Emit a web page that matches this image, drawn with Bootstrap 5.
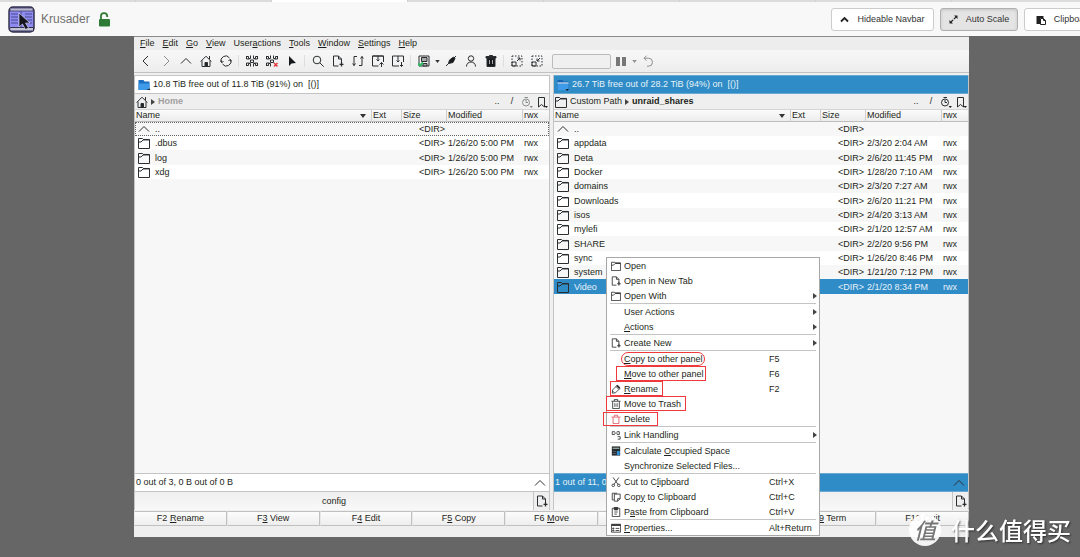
<!DOCTYPE html>
<html lang="en">
<head>
<meta charset="utf-8">
<meta name="viewport" content="width=device-width, initial-scale=1">
<title>Krusader</title>
<link href="https://cdn.jsdelivr.net/npm/bootstrap@5.3.0/dist/css/bootstrap.min.css" rel="stylesheet">
<style>
  body { background:#666; font-family:"Liberation Sans",Arial,sans-serif; font-size:9px; line-height:13px; color:#1d1f20; }
  svg { fill:none; stroke:#2b2e30; stroke-width:1; flex:none; display:block; }
  button, input { font:inherit; color:inherit; }
  u { text-underline-offset:1px; }
  svg.glyph { width:12px; height:12px; }

  .tab-strip { height:2px; background:#dcdcdc; }
  .tab-strip i { width:136px; border-right:1px solid #cfcfcf; }
  .tab-strip i.current { background:#fff; }
  .top-nav { height:34px; background:#f8f8f8; padding-left:8px; }
  .top-nav .app-logo { width:27px; height:27px; }
  .top-nav .title { font-size:12px; color:#707070; margin-left:6px; text-decoration:none; }
  .top-nav .btn { height:23px; padding:1px 0 0; font-size:9px; color:#333; background:#fff; border:1px solid #ccc; border-radius:3px; gap:8px; }
  .top-nav .btn.active { background:#e4e4e4; border-color:#b0b0b0; box-shadow:inset 0 1px 3px rgba(0,0,0,.14); }
  .top-nav .tools { gap:6px; margin-right:-24px; }
  .w-hide { width:103px; } .w-scale { width:78px; } .w-clip { width:80px; }

  .krusader { margin:0 111px 20px 134px; background:#efefef; border-top:1px solid #8b8b8b; }
  .menu-bar { height:13px; gap:8px; padding-left:6px; background:#ededed; }
  .menu-bar a { color:inherit; text-decoration:none; }
  .tool-bar { height:23px; padding-left:2px; border-bottom:1px solid #c2c2c2; background:linear-gradient(#f8f8f8,#ededed); }
  .flat { border:0; background:none; padding:0; display:flex; align-items:center; justify-content:center; }
  .tool-bar .flat { width:20px; height:20px; }
  .tool-bar .flat.arrow { width:7px; }
  .tool-bar .vr-line { width:1px; height:12px; background:#dedede; margin:0 3px 0 2px; }
  .tool-bar input { width:59px; height:15px; margin-left:5px; border:1px solid #bcbcbc; border-radius:2px; background:#f0f0f0; }
  .muted-icon { opacity:.5; }

  .panels { gap:3px; padding-top:2px; padding-bottom:1px; }
  .pane { min-width:0; border:solid #c4c4c4; border-width:0 1px; }
  .disk { height:19px; border:solid #c4c4c4; border-width:1px 0; background:#fff; padding-left:3px; gap:3px; }
  .focused .disk, .focused .stat { background:#308cc6; color:#e6f2fa; border-color:#6aa9d2; }
  .crumbs { height:15px; padding:0 1px; gap:3px; }
  .crumbs a { color:inherit; text-decoration:none; }
  .crumbs .here-muted { color:#a0a0a0; }
  .crumbs .flat { width:12px; }
  .list-area { background:#f7f7f7; }
  .files { width:100%; table-layout:fixed; border-collapse:separate; border-spacing:0; }
  .files th { height:13px; line-height:11px; font-weight:400; padding:0 1px; border-bottom:1px solid #bdbdbd; border-top:1px solid #d4d4d4; border-left:1px solid #cfcfcf; background:linear-gradient(#fbfbfb,#ededed); }
  .files th:first-child { border-left:0; }
  .files td { height:14px; line-height:14px; padding:0 1px; white-space:nowrap; }
  .files tbody tr:nth-child(3n) td { height:15px; }
  .files tbody tr:nth-child(even) td { background:#fff; }
  .files tbody tr.picked td { background:#308cc6; color:#e6f2fa; }
  .files tbody tr.cursor { outline:1px dotted #666; outline-offset:-1px; }
  .files .size { text-align:right; }
  .files td.date, .files td.perm { padding-left:2px; }
  .c-ext { width:30px; } .c-size { width:45px; } .c-date { width:76px; } .c-perm { width:27px; }
  .fname { gap:5px; padding-left:2px; }
  .stat { height:19px; background:#fff; border:solid #c4c4c4; border-width:1px 0; padding:0 3px 0 1px; }
  .tab-row { height:18px; }
  .tab-row .tab-btn { background:linear-gradient(#efefef,#f8f8f8); border:0; border-right:1px solid #c4c4c4; padding:0; }
  .tab-row .flat { width:15px; }
  .fkeys button { height:15px; line-height:13px; padding:0; border:1px solid #c0c0c0; border-left-color:#e8e8e8; border-radius:1px; background:linear-gradient(#fcfcfc,#eee); flex:1 1 0; }
  .foot { height:11px; }

  .context { top:182px; left:52px; width:214px; z-index:5; background:#fff; border:1px solid #a8a8a8; }
  .context button { width:100%; height:15px; line-height:15px; border:0; background:none; padding:1px 2px 0 4px; display:flex; align-items:center; text-align:left; position:relative; white-space:nowrap; }
  .context hr { height:1px; margin:0 3px; border:0; background:#c4c4c4; opacity:1; }
  .context .pic { width:13px; flex:none; }
  .context .pic svg { width:10px; height:10px; }
  .context .label-text { flex:1; }
  .context kbd { width:48px; padding:0; background:none; color:inherit; font:inherit; }
  .context .sub { width:4px; height:6px; }
  .mark-box { position:absolute; height:15px; top:0; z-index:1; border:1px solid #f0393c; pointer-events:none; }
  .m-copy { left:14px; width:84px; height:14px; border-radius:7px; top:1px; }
  .m-move { left:9px; width:90px; }
  .m-rename { left:3px; width:53px; }
  .m-trash { left:-1px; width:80px; }
  .m-delete { left:-4px; width:55px; height:14px; top:1px; }

  .stamp { right:9px; bottom:11px; z-index:10; gap:10px; color:#fff; font-family:"Noto Sans CJK SC",sans-serif; font-size:24px; font-weight:500; line-height:32px; text-shadow:1px 1px 2px rgba(0,0,0,.55); pointer-events:none; }
  .stamp .seal { width:32px; height:32px; border-radius:50%; background:rgba(255,255,255,.93); color:#777; font-size:22px; line-height:30px; text-align:center; font-style:italic; text-shadow:none; }
</style>
</head>
<body class="vh-100 d-flex flex-column overflow-hidden">

<svg class="d-none" aria-hidden="true">
  <symbol id="left" viewBox="0 0 12 12"><path d="M8 1 3 6l5 5"/></symbol>
  <symbol id="right" viewBox="0 0 12 12"><path d="m4 1 5 5-5 5"/></symbol>
  <symbol id="up" viewBox="0 0 12 12"><path d="m1 8.500 5-5 5 5"/></symbol>
  <symbol id="home" viewBox="0 0 12 12"><path d="M.7 6.500 6 1.200l5.300 5.300M2 5.500v6h8v-6M9.500 1v3"/><path d="M5 11V7.500h2.500V11z" fill="#222"/></symbol>
  <symbol id="reload" viewBox="0 0 12 12"><path d="M1.500 7.500a4.600 4.600 0 0 1 8-4.500M10.500 4.500a4.600 4.600 0 0 1-8 4.500M.3 5.500l1.200 2 2-1M11.700 6.500l-1.200-2-2 1"/></symbol>
  <symbol id="sel" viewBox="0 0 12 12"><path d="M.5 1.500h2v2h2v-3M11.500 1.500h-2v2h-2v-3M.5 10.500h2v-2h2v3M11.500 10.500h-2v-2h-2v3M4.500 5h3v2.500h-3zM.5 1v3h3M11.500 1v3h-3M.5 11V8h3M11.500 11V8h-3"/></symbol>
  <symbol id="unsel" viewBox="0 0 12 12"><path d="M.5 1.500h2v2h2v-3M11.500 1.500h-2v2h-2v-3M.5 10.500h2v-2h2v3M4.500 5h3v2.500h-3zM.5 1v3h3M11.500 1v3h-3M.5 11V8h3"/><path d="m8 8 3.500 3.500M11.500 8 8 11.500" stroke="#e0353a" stroke-width="1.400"/></symbol>
  <symbol id="pointer" viewBox="0 0 12 12"><path d="M3 1v10l2.500-2.500L10 8z" fill="#16191b" stroke="none"/></symbol>
  <symbol id="search" viewBox="0 0 12 12"><circle cx="5" cy="5" r="3.800"/><path d="m7.700 7.700 4 4"/></symbol>
  <symbol id="newtab" viewBox="0 0 12 12"><path d="M6.500 11h-5V1h5l3 3v4M6.500 1v3h3"/><path d="M9.500 7v4.500M7.500 9.300h4" stroke-width="1.300"/></symbol>
  <symbol id="sync" viewBox="0 0 12 12"><path d="M5 1.500H2v9M.7 8.500 2 10.500l1.500-2M7 10.500h3v-9M8.500 3.500 10 1.500l1.300 2"/></symbol>
  <symbol id="pack" viewBox="0 0 12 12"><path d="M6.500 11h-6V1h11v6M.5 1h11M6 1v5M4.500 4.500 6 6l1.500-1.500M9.500 12V7.500M7.500 9.500l2-2 2 2"/></symbol>
  <symbol id="unpack" viewBox="0 0 12 12"><path d="M7 11H.5V1h11v6M6 1v6M4.500 5.500 6 7l1.500-1.500M9.500 7v4.500M8 10l1.500 1.500L11 10"/></symbol>
  <symbol id="device" viewBox="0 0 12 12"><path d="M1 1h10v10H1z"/><path d="M3.500 2.500h5.500v4H3.500zM5 8.500h4V11H5z" fill="#aaa"/><path d="m.5 8.500 1.500 2 3-3" stroke="#2bbd62" stroke-width="2"/></symbol>
  <symbol id="plug" viewBox="0 0 12 12"><path d="m1 11 3-3M8.500 3.500 11 1"/><path d="m3.500 8.500 1-3.500 4-3 1.500 1.500-2 4z" fill="#16191b"/></symbol>
  <symbol id="person" viewBox="0 0 12 12"><circle cx="6" cy="3.500" r="2.700"/><path d="M1.500 11.500c0-6 9-6 9 0"/></symbol>
  <symbol id="bin" viewBox="0 0 12 12"><path d="M2 3h8v8.500H2zM1 1.500h10V3H1zM4.500.5h3v1h-3z" fill="#16191b"/><path d="M4.500 5v4M7.500 5v4" stroke="#aaa"/></symbol>
  <symbol id="grow" viewBox="0 0 12 12"><path d="M1 1h10v10H1z" stroke-dasharray="1.500 1.500"/><path d="M1 7h4v4H1zM6 6l3-3M6.500 3H9v2.500"/></symbol>
  <symbol id="shrink" viewBox="0 0 12 12"><path d="M1 1h10v10H1z" stroke-dasharray="1.500 1.500"/><path d="M1 7h4v4H1zM9 3 6 6M6 3.500V6h2.500"/></symbol>
  <symbol id="undo" viewBox="0 0 12 12"><path d="M4.500.7 2 3.200l2.500 2.500M2 3.200h4.500a4 4 0 0 1 0 8H5"/></symbol>
  <symbol id="dir" viewBox="0 0 12 12"><path d="M.5 1.500h4l1 1h6v9H.5zM.5 5h2.500l2-2"/><path d="M5 2.700h6.500" stroke-width="1.500"/></symbol>
  <symbol id="clock" viewBox="0 0 12 12"><circle cx="5" cy="6.500" r="3.500"/><path d="M5 4v2.500h2M3.500 1.500h3.500"/><path d="M8.500 10h3.500l-1.700 2z" fill="#222" stroke="none"/></symbol>
  <symbol id="mark" viewBox="0 0 12 12"><path d="M2.500 1.500h6V11l-3-2.500-3 2.500z"/><path d="M8.500 10h3.500l-1.700 2z" fill="#222" stroke="none"/></symbol>
  <symbol id="tri-r" viewBox="0 0 4 6"><path d="m0 0 4 3-4 3z" fill="#444" stroke="none"/></symbol>
  <symbol id="tri-d" viewBox="0 0 6 4"><path d="M0 0h6L3 4z" fill="#333" stroke="none"/></symbol>
  <symbol id="disk" viewBox="0 0 12 12"><path d="M.5 1h5l1 1.500h5V11H.5z" fill="#1b6ec2" stroke="none"/><path d="M.5 4.500h11V11H.5z" fill="#3f9be8" stroke="none"/><path d="M8 11h4v-1.500z" fill="#123" stroke="none"/></symbol>
  <symbol id="disk-lit" viewBox="0 0 12 12"><path d="M.5 1h5l1 1.500h5V11H.5z" fill="#1763b4" stroke="none"/><path d="M.5 4.500h11V11H.5z" fill="#3f9be8" stroke="none"/><path d="M.5 4h11" stroke="#f4faff"/><path d="M8.500 10h3.500l-1.700 2z" fill="#123" stroke="none"/></symbol>
  <symbol id="pen" viewBox="0 0 12 12"><path d="m1.500 11 .5-4 5-5 3.500 3.500-5 5zM6 3l3.500 3.500M2 8.500 3.500 10"/><path d="M7 1.500 10.500 5" stroke-width="2"/></symbol>
  <symbol id="can" viewBox="0 0 12 12"><path d="M2 3v8.500h8V3M.5 2.700h11M4 2.500v-2h4v2M4.700 5v4.500M7.300 5v4.500"/></symbol>
  <symbol id="can-red" viewBox="0 0 12 12"><path stroke="#dd5360" d="M2.500 4v7.500h7V4M.5 3.700h11M4 3.500v-2h4v2"/></symbol>
  <symbol id="chain" viewBox="0 0 12 12"><path d="M4.500 2H1.500v3.500h3M7 2h3v3.500H7M8 8h3v3H8M3.500 3.700h4.500"/></symbol>
  <symbol id="calc" viewBox="0 0 12 12"><path d="M1 .5h10v11H1z" fill="#25292c" stroke="none"/><path d="M2 2h8v1.500H2z" fill="#9aa" stroke="none"/><path d="M7 6h3.500v5H7z" fill="#2f8fd8" stroke="none"/><path d="M2 6.500h4M2 9h4" stroke="#667"/></symbol>
  <symbol id="cut" viewBox="0 0 12 12"><path d="m2.500.5 6 8.500M9.500.5 3.500 9"/><circle cx="2.700" cy="10" r="1.500"/><circle cx="9.300" cy="10" r="1.500"/></symbol>
  <symbol id="copy" viewBox="0 0 12 12"><path d="M3.500 9.500h-2v-8h6M4 2.500h7V8l-3 3H4zM8 11V8h3"/></symbol>
  <symbol id="paste" viewBox="0 0 12 12"><path d="M1.500 1.500h9v10h-9zM4 6h4M4 8.500h3"/><path d="M4 .5h4v3H4z" fill="#333"/></symbol>
  <symbol id="props" viewBox="0 0 12 12"><path d="M.5 1.500h11v9.500H.5zM5.500 6.500h4.500M5.500 9h4.500"/><path d="M.5 2.500h11" stroke-width="2"/><path d="M2 6h1.500v1H2zM2 8.500h1.500v1H2z"/></symbol>
</svg>

<div class="tab-strip d-flex flex-shrink-0"><i></i><i></i><i class="current"></i><i></i><i></i><i></i><i></i></div>

<nav class="top-nav d-flex align-items-center flex-shrink-0 overflow-hidden">
  <svg class="app-logo" viewBox="0 0 27 27"><rect x="1" y="1" width="25" height="25" rx="4" fill="#8d8bef" stroke="#33324e" stroke-width="1.500"/><path d="M2 2h23v3H2z" fill="#b9b8d8" stroke="#33324e" stroke-width=".7"/><path d="M3 8h7M3 11h7M3 14h7M3 17h7M17 8h7M17 11h7M17 14h7M17 17h7M13 5v16" stroke="#4a4990"/><path d="M5 21.500h20.500V25H3.500a2 2 0 0 1-1-3.500z" fill="#c3c3d8" stroke="#33324e"/><path d="M11 7v14l3.500-3 3 5.500 3-1.500-3-5h4.500z" fill="#15151d" stroke="#e5e5ff" stroke-width=".6"/></svg>
  <a class="title" href="#">Krusader</a>
  <svg class="me-auto ms-2" width="13" height="15" viewBox="0 0 13 15"><path d="M3 7.500V4.500a3 3 0 0 1 6.200-.5v1" stroke="#2f7a37" stroke-width="1.800"/><rect x="1" y="7" width="11" height="7.500" rx="1" fill="#2f7a37" stroke="none"/></svg>
  <div class="tools d-flex flex-shrink-0">
    <button class="btn w-hide d-flex align-items-center justify-content-center"><svg width="9" height="7" viewBox="0 0 9 7"><path d="m1 5.500 3.500-3.500L8 5.500" stroke="#222" stroke-width="1.800"/></svg>Hideable Navbar</button>
    <button class="btn active w-scale d-flex align-items-center justify-content-center"><svg width="9" height="9" viewBox="0 0 9 9"><path d="m2 7 5-5" stroke="#222" stroke-width="1.200" stroke-dasharray="3 1 3"/><path d="M5 .5h3.500V4zM.5 5v3.500H4z" fill="#222" stroke="none"/></svg>Auto Scale</button>
    <button class="btn w-clip d-flex align-items-center justify-content-center"><svg width="10" height="10" viewBox="0 0 10 10"><path d="M.5 1h7v2H4v6H.5z" fill="#222" stroke="none"/><path d="M4.500 3.500h3l2 2v4h-5zM7.500 3.500v2h2" fill="#fff" stroke="#222"/></svg>Clipboard</button>
  </div>
</nav>

<main class="krusader flex-grow-1 d-flex flex-column">
  <div class="menu-bar d-flex align-items-center flex-shrink-0">
    <a href="#"><u>F</u>ile</a><a href="#"><u>E</u>dit</a><a href="#"><u>G</u>o</a><a href="#"><u>V</u>iew</a><a href="#">User<u>a</u>ctions</a><a href="#"><u>T</u>ools</a><a href="#"><u>W</u>indow</a><a href="#"><u>S</u>ettings</a><a href="#"><u>H</u>elp</a>
  </div>
  <div class="tool-bar d-flex align-items-center flex-shrink-0">
    <button class="flat" aria-label="Back"><svg class="glyph"><use href="#left"/></svg></button>
    <button class="flat muted-icon" aria-label="Forward"><svg class="glyph"><use href="#right"/></svg></button>
    <button class="flat" aria-label="Up"><svg class="glyph"><use href="#up"/></svg></button>
    <button class="flat" aria-label="Home"><svg class="glyph"><use href="#home"/></svg></button>
    <button class="flat" aria-label="Reload"><svg class="glyph"><use href="#reload"/></svg></button>
    <span class="vr-line"></span>
    <button class="flat" aria-label="Select"><svg class="glyph"><use href="#sel"/></svg></button>
    <button class="flat" aria-label="Unselect"><svg class="glyph"><use href="#unsel"/></svg></button>
    <button class="flat" aria-label="Pointer"><svg class="glyph"><use href="#pointer"/></svg></button>
    <span class="vr-line"></span>
    <button class="flat" aria-label="Search"><svg class="glyph"><use href="#search"/></svg></button>
    <button class="flat" aria-label="New file"><svg class="glyph"><use href="#newtab"/></svg></button>
    <button class="flat" aria-label="Synchronize"><svg class="glyph"><use href="#sync"/></svg></button>
    <button class="flat" aria-label="Pack"><svg class="glyph"><use href="#pack"/></svg></button>
    <button class="flat" aria-label="Unpack"><svg class="glyph"><use href="#unpack"/></svg></button>
    <span class="vr-line"></span>
    <button class="flat" aria-label="Devices"><svg class="glyph"><use href="#device"/></svg></button>
    <button class="flat arrow" aria-label="Device menu"><svg width="5" height="3"><use href="#tri-d"/></svg></button>
    <button class="flat" aria-label="Connect"><svg class="glyph"><use href="#plug"/></svg></button>
    <button class="flat" aria-label="User"><svg class="glyph"><use href="#person"/></svg></button>
    <button class="flat" aria-label="Trash"><svg class="glyph"><use href="#bin"/></svg></button>
    <span class="vr-line"></span>
    <button class="flat" aria-label="Expand"><svg class="glyph"><use href="#grow"/></svg></button>
    <button class="flat" aria-label="Compact"><svg class="glyph"><use href="#shrink"/></svg></button>
    <input type="text" aria-label="Job progress">
    <button class="flat" aria-label="Pause"><svg width="10" height="9" viewBox="0 0 10 9"><path d="M0 0h4v9H0zM6 0h4v9H6z" fill="#777" stroke="none"/></svg></button>
    <button class="flat arrow muted-icon" aria-label="Job menu"><svg width="5" height="3"><use href="#tri-d"/></svg></button>
    <button class="flat muted-icon" aria-label="Undo"><svg class="glyph"><use href="#undo"/></svg></button>
  </div>

  <div class="panels d-flex flex-grow-1">
    <section class="pane d-flex flex-column flex-fill w-50">
      <div class="disk d-flex align-items-center"><svg class="glyph"><use href="#disk"/></svg><span>10.8 TiB free out of 11.8 TiB (91%) on &nbsp;[()]</span></div>
      <div class="crumbs d-flex align-items-center">
        <svg class="glyph"><use href="#home"/></svg><svg width="4" height="6"><use href="#tri-r"/></svg><a href="#" class="me-auto fw-bold here-muted">Home</a>
        <button class="flat">..</button><button class="flat">/</button><button class="flat muted-icon" aria-label="History"><svg class="glyph"><use href="#clock"/></svg></button><button class="flat" aria-label="Bookmarks"><svg class="glyph"><use href="#mark"/></svg></button>
      </div>
      <div class="list-area flex-grow-1">
        <table class="files">
          <thead><tr><th><div class="d-flex align-items-center justify-content-between pe-1">Name<svg width="6" height="4"><use href="#tri-d"/></svg></div></th><th class="c-ext">Ext</th><th class="c-size">Size</th><th class="c-date">Modified</th><th class="c-perm">rwx</th></tr></thead>
          <tbody id="home-files"></tbody>
        </table>
      </div>
      <div class="stat d-flex align-items-center justify-content-between"><span>0 out of 3, 0 B out of 0 B</span><svg class="glyph"><use href="#up"/></svg></div>
      <div class="tab-row d-flex"><button class="tab-btn flex-grow-1">config</button><button class="flat" aria-label="New tab"><svg class="glyph"><use href="#newtab"/></svg></button></div>
    </section>

    <section class="pane focused d-flex flex-column flex-fill w-50 position-relative">
      <div class="disk d-flex align-items-center"><svg class="glyph"><use href="#disk-lit"/></svg><span>26.7 TiB free out of 28.2 TiB (94%) on &nbsp;[()]</span></div>
      <div class="crumbs d-flex align-items-center">
        <svg class="glyph"><use href="#dir"/></svg><a href="#">Custom Path</a><svg width="4" height="6"><use href="#tri-r"/></svg><a href="#" class="me-auto fw-bold">unraid_shares</a>
        <button class="flat">..</button><button class="flat">/</button><button class="flat" aria-label="History"><svg class="glyph"><use href="#clock"/></svg></button><button class="flat" aria-label="Bookmarks"><svg class="glyph"><use href="#mark"/></svg></button>
      </div>
      <div class="list-area flex-grow-1">
        <table class="files">
          <thead><tr><th><div class="d-flex align-items-center justify-content-between pe-1">Name<svg width="6" height="4"><use href="#tri-d"/></svg></div></th><th class="c-ext">Ext</th><th class="c-size">Size</th><th class="c-date">Modified</th><th class="c-perm">rwx</th></tr></thead>
          <tbody id="share-files"></tbody>
        </table>
      </div>
      <div class="stat d-flex align-items-center justify-content-between"><span>1 out of 11, 0 B out of 0 B</span><svg class="glyph"><use href="#up"/></svg></div>
      <div class="tab-row d-flex"><button class="tab-btn flex-grow-1">unraid_shares</button><button class="flat" aria-label="New tab"><svg class="glyph"><use href="#newtab"/></svg></button></div>

      <div class="context position-absolute" role="menu">
        <button><span class="pic"><svg><use href="#dir"/></svg></span><span class="label-text">Open</span></button>
        <button><span class="pic"><svg><use href="#newtab"/></svg></span><span class="label-text">Open in New Tab</span></button>
        <button><span class="pic"><svg><use href="#dir"/></svg></span><span class="label-text">Open With</span><svg class="sub"><use href="#tri-r"/></svg></button>
        <hr>
        <button><span class="pic"></span><span class="label-text">User Actions</span><svg class="sub"><use href="#tri-r"/></svg></button>
        <button><span class="pic"></span><span class="label-text"><u>A</u>ctions</span><svg class="sub"><use href="#tri-r"/></svg></button>
        <hr>
        <button><span class="pic"><svg><use href="#newtab"/></svg></span><span class="label-text">Create New</span><svg class="sub"><use href="#tri-r"/></svg></button>
        <hr>
        <button><span class="pic"></span><span class="label-text"><u>C</u>opy to other panel</span><kbd>F5</kbd><span class="mark-box m-copy"></span></button>
        <button><span class="pic"></span><span class="label-text"><u>M</u>ove to other panel</span><kbd>F6</kbd><span class="mark-box m-move"></span></button>
        <button><span class="pic"><svg><use href="#pen"/></svg></span><span class="label-text"><u>R</u>ename</span><kbd>F2</kbd><span class="mark-box m-rename"></span></button>
        <button><span class="pic"><svg><use href="#can"/></svg></span><span class="label-text">Move to Trash</span><span class="mark-box m-trash"></span></button>
        <button><span class="pic"><svg><use href="#can-red"/></svg></span><span class="label-text">Delete</span><span class="mark-box m-delete"></span></button>
        <hr>
        <button><span class="pic"><svg><use href="#chain"/></svg></span><span class="label-text">Link Handling</span><svg class="sub"><use href="#tri-r"/></svg></button>
        <hr>
        <button><span class="pic"><svg><use href="#calc"/></svg></span><span class="label-text">Calculate <u>O</u>ccupied Space</span></button>
        <button><span class="pic"></span><span class="label-text">Synchronize Selected Files...</span></button>
        <hr>
        <button><span class="pic"><svg><use href="#cut"/></svg></span><span class="label-text">Cut to C<u>l</u>ipboard</span><kbd>Ctrl+X</kbd></button>
        <button><span class="pic"><svg><use href="#copy"/></svg></span><span class="label-text">Cop<u>y</u> to Clipboard</span><kbd>Ctrl+C</kbd></button>
        <button><span class="pic"><svg><use href="#paste"/></svg></span><span class="label-text">P<u>a</u>ste from Clipboard</span><kbd>Ctrl+V</kbd></button>
        <hr>
        <button><span class="pic"><svg><use href="#props"/></svg></span><span class="label-text"><u>P</u>roperties...</span><kbd>Alt+Return</kbd></button>
      </div>
    </section>
  </div>

  <div class="fkeys d-flex flex-shrink-0">
    <button>F2 <u>R</u>ename</button><button>F<u>3</u> View</button><button>F<u>4</u> Edit</button><button>F<u>5</u> Copy</button><button>F6 <u>M</u>ove</button><button>F<u>7</u> Mkdir</button><button>F<u>8</u> Delete</button><button>F<u>9</u> Term</button><button>F10 <u>Q</u>uit</button>
  </div>
  <div class="foot flex-shrink-0"></div>
</main>

<div class="stamp position-fixed d-flex align-items-center"><span class="seal">值</span><span>什么值得买</span></div>

<script>
  const rows = {
    'home-files': [['.dbus','1/26/20 5:00 PM'],['log','1/26/20 5:00 PM'],['xdg','1/26/20 5:00 PM']],
    'share-files': [['appdata','2/3/20 2:04 AM'],['Deta','2/6/20 11:45 PM'],['Docker','1/28/20 7:10 AM'],['domains','2/3/20 7:27 AM'],['Downloads','2/6/20 11:21 PM'],['isos','2/4/20 3:13 AM'],['mylefi','2/1/20 12:57 AM'],['SHARE','2/2/20 9:56 PM'],['sync','1/26/20 8:46 PM'],['system','1/21/20 7:12 PM'],['Video','2/1/20 8:34 PM']]
  };
  const line = (icon, name, date, perm, cls) =>
    `<tr class="${cls}"><td><div class="fname d-flex align-items-center"><svg class="glyph"><use href="#${icon}"/></svg>${name}</div></td><td></td><td class="size">&lt;DIR&gt;</td><td class="date">${date}</td><td class="perm">${perm}</td></tr>`;
  for (const [id, list] of Object.entries(rows)) {
    document.getElementById(id).innerHTML =
      line('up', '..', '', '', id === 'home-files' ? 'cursor' : '') +
      list.map(([n, d]) => line('dir', n, d, 'rwx', n === 'Video' ? 'picked' : '')).join('');
  }
</script>
<script src="https://cdn.jsdelivr.net/npm/bootstrap@5.3.0/dist/js/bootstrap.bundle.min.js"></script>
</body>
</html>
